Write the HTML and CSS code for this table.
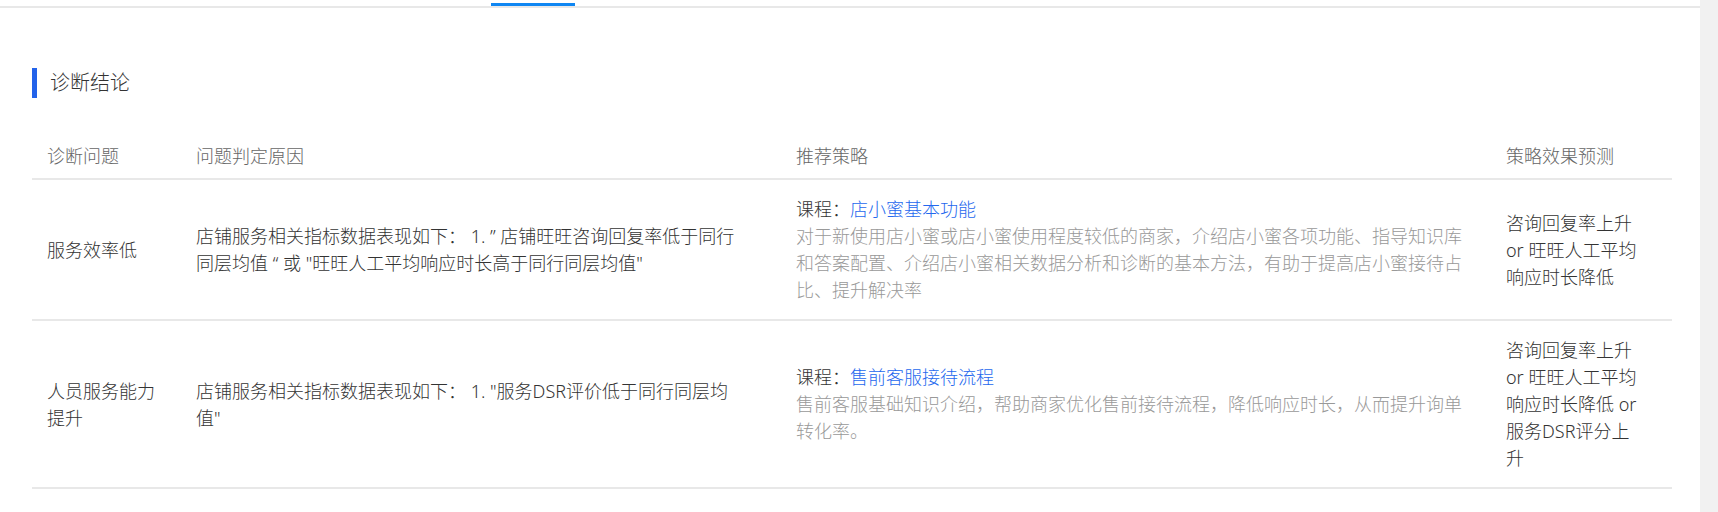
FILE: index.html
```html
<!DOCTYPE html>
<html lang="zh-CN">
<head>
<meta charset="utf-8">
<title>诊断结论</title>
<link rel="stylesheet" href="styles.css">
</head>
<body>
<div class="page">
  <main class="main">
    <div class="tabs"><span class="tab-ink"></span></div>
    <section class="content">
      <h2 class="section-title"><span class="title-bar"></span><span class="title-text">诊断结论</span></h2>
      <table class="diag">
        <colgroup>
          <col class="c1"><col class="c2"><col class="c3"><col class="c4">
        </colgroup>
        <thead>
          <tr>
            <th class="p1">诊断问题</th>
            <th class="p2">问题判定原因</th>
            <th class="p3">推荐策略</th>
            <th class="p4">策略效果预测</th>
          </tr>
        </thead>
        <tbody>
          <tr>
            <td class="p1">服务效率低</td>
            <td class="p2">店铺服务相关指标数据表现如下： 1. ” 店铺旺旺咨询回复率低于同行同层均值 “ 或 "旺旺人工平均响应时长高于同行同层均值"</td>
            <td class="p3">
              <div class="course">课程：<a class="course-link" href="#">店小蜜基本功能</a></div>
              <div class="desc">对于新使用店小蜜或店小蜜使用程度较低的商家，介绍店小蜜各项功能、指导知识库和答案配置、介绍店小蜜相关数据分析和诊断的基本方法，有助于提高店小蜜接待占比、提升解决率</div>
            </td>
            <td class="p4">咨询回复率上升 or 旺旺人工平均响应时长降低</td>
          </tr>
          <tr>
            <td class="p1">人员服务能力提升</td>
            <td class="p2">店铺服务相关指标数据表现如下： 1. "服务DSR评价低于同行同层均值"</td>
            <td class="p3">
              <div class="course">课程：<a class="course-link" href="#">售前客服接待流程</a></div>
              <div class="desc">售前客服基础知识介绍，帮助商家优化售前接待流程，降低响应时长，从而提升询单转化率。</div>
            </td>
            <td class="p4">咨询回复率上升 or 旺旺人工平均响应时长降低 or 服务DSR评分上升</td>
          </tr>
        </tbody>
      </table>
    </section>
  </main>
  <div class="scroll-track"></div>
</div>
</body>
</html>
```
FILE: styles.css
```css
html, body {
  margin: 0;
  padding: 0;
  background: #ffffff;
}

body {
  font-family: "Noto Sans", "Noto Sans CJK SC", sans-serif;
  font-weight: 300;
  color: #333333;
}

.page {
  display: flex;
  min-height: 100vh;
}

.main {
  width: 1700px;
  flex: none;
}

.scroll-track {
  flex: 1;
  background: #f1f1f1;
}

.tabs {
  height: 6px;
  border-bottom: 2px solid #e8e8e8;
  display: flex;
  align-items: flex-end;
  padding-left: 491px;
}

.tab-ink {
  display: block;
  width: 84px;
  height: 3px;
  background: #0f86f2;
}

.content {
  padding: 0 28px 0 32px;
}

.section-title {
  margin: 60px 0 0;
  display: flex;
  align-items: center;
  height: 30px;
  font-weight: 300;
}

.title-bar {
  width: 5px;
  height: 30px;
  background: #2363ea;
  flex: none;
}

.title-text {
  margin-left: 13px;
  font-size: 20px;
  line-height: 30px;
  color: #333333;
}

.diag {
  margin-top: 29px;
  width: 1640px;
  table-layout: fixed;
  border-collapse: collapse;
  font-size: 18px;
  line-height: 27px;
}

.c1 { width: 149px; }
.c2 { width: 600px; }
.c3 { width: 710px; }
.c4 { width: 181px; }

.diag th {
  text-align: left;
  font-weight: 300;
  color: #666666;
  padding-top: 16px;
  padding-bottom: 8px;
  border-bottom: 2px solid #e8e8e8;
}

.diag td {
  vertical-align: middle;
  padding-top: 16px;
  padding-bottom: 15px;
  border-bottom: 2px solid #e8e8e8;
  color: #333333;
}

.p1 { padding-left: 15px; padding-right: 20px; }
.p2 { padding-left: 15px; padding-right: 37px; }
.p3 { padding-left: 15px; padding-right: 20px; }
.p4 { padding-left: 15px; padding-right: 30px; }

.course {
  color: #333333;
}

.course-link {
  color: #2468ee;
  text-decoration: none;
}

.desc {
  color: #999999;
}
```
